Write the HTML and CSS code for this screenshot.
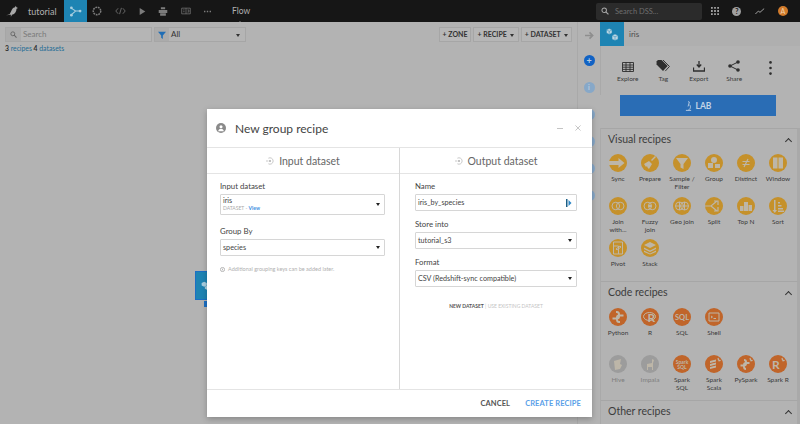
FILE: index.html
```html
<!DOCTYPE html>
<html lang="en">
<head>
<meta charset="utf-8">
<title>New group recipe</title>
<link rel="stylesheet" href="styles.css">
</head>
<body>
<div class="app">
  <header class="topbar">
    <svg class="logo" viewBox="0 0 16 14" width="12" height="14"><path d="M0 13l5-2 3-6c1-2 3-3 4-3l1-2 1 2 2 1-2 1c0 4-2 7-6 8l-1 2H6l1-2H4z" fill="#a8a8a8"/></svg>
    <span class="project">tutorial</span>
    <span class="tile-flow"><svg viewBox="0 0 14 12" width="13" height="11"><path d="M2 2l5 3.500h5M2 10l5-4.500" fill="none" stroke="#a9cfe0" stroke-width="1.200"/><circle cx="2.500" cy="2" r="1.500" fill="#a9cfe0"/><circle cx="2.500" cy="10" r="1.500" fill="#a9cfe0"/><circle cx="12" cy="5.500" r="1.500" fill="#a9cfe0"/></svg></span>
    <nav class="nav-icons">
      <svg viewBox="0 0 12 12" width="10" height="10"><circle cx="6" cy="6" r="4.500" fill="none" stroke="#7c7c7c" stroke-width="1.800" stroke-dasharray="2.200 .9"/></svg>
      <svg viewBox="0 0 14 10" width="11" height="8"><path d="M4 1.500L1 5l3 3.500M10 1.500L13 5l-3 3.500M8.200 1L5.800 9" fill="none" stroke="#7c7c7c"/></svg>
      <svg viewBox="0 0 10 12" width="7" height="9"><path d="M1 1l8 5-8 5z" fill="#7c7c7c"/></svg>
      <svg viewBox="0 0 14 12" width="10" height="9"><path d="M4 0h6v3H4zM1 4h12v4H1zM3 8.500h8V12H3z" fill="#7c7c7c"/></svg>
      <svg viewBox="0 0 14 10" width="10" height="8"><path d="M1 1h12v8H1zM7 1v8M3 3.500h2M3 6h2M9 3.500h2v3H9" fill="none" stroke="#7c7c7c"/></svg>
      <svg viewBox="0 0 10 4" width="7" height="3"><path d="M0 1h2v2H0zM4 1h2v2H4zM8 1h2v2H8z" fill="#7c7c7c"/></svg>
    </nav>
    <span class="crumb">Flow</span>
    <div class="global-search">
      <svg viewBox="0 0 10 10" width="8" height="8"><circle cx="4" cy="4" r="2.800" fill="none" stroke="#a8a8a8" stroke-width="1.300"/><path d="M6 6l3.300 3.300" stroke="#a8a8a8" stroke-width="1.500"/></svg>
      <span>Search DSS...</span>
    </div>
    <div class="top-actions">
      <svg viewBox="0 0 9 9" width="8" height="8"><path d="M0 0h2v2H0zM3.500 0h2v2h-2zM7 0h2v2H7zM0 3.500h2v2H0zM3.500 3.500h2v2h-2zM7 3.500h2v2H7zM0 7h2v2H0zM3.500 7h2v2h-2zM7 7h2v2H7z" fill="#a0a0a0"/></svg>
      <span class="help">?</span>
      <svg viewBox="0 0 12 8" width="10" height="7"><path d="M.500 7l3.500-3.500 2 1.500 5-4.500" fill="none" stroke="#a0a0a0" stroke-width="1.200"/></svg>
      <span class="avatar">A</span>
    </div>
  </header>

  <div class="body">
    <main class="canvas">
      <div class="toolbar">
        <div class="search-box">
          <span class="search-ico"><svg viewBox="0 0 10 10" width="7" height="7"><circle cx="4" cy="4" r="2.800" fill="none" stroke="#666" stroke-width="1.300"/><path d="M6 6l3.300 3.300" stroke="#666" stroke-width="1.500"/></svg></span>
          <span class="search-text">Search</span>
        </div>
        <div class="filter-box">
          <span class="filter-ico"><svg viewBox="0 0 10 10" width="8" height="8"><path d="M0 1h10L6 5.500V10L4 8.500v-3z" fill="#1f6db5"/></svg></span>
          <span class="filter-text">All</span>
          <i class="caret"></i>
        </div>
        <div class="flow-buttons">
          <span class="tool-btn btn-zone">+ ZONE</span>
          <span class="tool-btn btn-recipe">+ RECIPE <i class="caret"></i></span>
          <span class="tool-btn btn-dataset">+ DATASET <i class="caret"></i></span>
        </div>
      </div>
      <p class="counts"><b>3</b> <a>recipes</a> <b>4</b> <a>datasets</a></p>
      <div class="flow-node">
        <svg viewBox="0 0 14 14" width="9" height="9"><path d="M1 3l4-2 4 2v4l-4 2-4-2zM6 9l4-2 3 2v3l-3 2-4-2z" fill="#a9cfe0"/></svg>
      </div>
      <span class="flow-node-label"></span>
    </main>

    <div class="rail">
      <svg class="rail-arrow" viewBox="0 0 10 10" width="9" height="9"><path d="M0 5h8M5 1.500L8.500 5 5 8.500" fill="none" stroke="#8e8e8e" stroke-width="1.800"/></svg>
      <span class="dot dot-plus">+</span>
      <span class="dot dot-pale">i</span>
      <span class="dot dot-pale"></span>
      <span class="dot dot-pale"></span>
      <span class="dot dot-pale"></span>
      <span class="dot dot-pale"></span>
    </div>

    <aside class="side">
      <div class="side-head">
        <span class="side-tile"><svg viewBox="0 0 14 14" width="13" height="13"><g fill="#bcd5e2" stroke="#1e84b3" stroke-width=".5"><path d="M.500 2L3.500.500 6.500 2v3.500L3.500 7 .500 5.500z"/><path d="M.500 2l3 1.500 3-1.500M3.500 3.500V7" fill="none"/><path d="M6.500 8l3.200-1.500L13 8v4l-3.300 1.500L6.500 12z"/><path d="M6.500 8l3.200 1.500L13 8M9.700 9.500v4" fill="none"/></g></svg></span>
        <span class="side-title">iris</span>
      </div>
      <div class="side-actions">
        <div class="action">
          <svg viewBox="0 0 12 10" width="12" height="10"><path d="M.500.500h11v9H.500zM.500 3h11M.500 5.200h11M.500 7.400h11M4 .500v9M8 .500v9" fill="none" stroke="#2e2e2e" stroke-width=".9"/></svg>
          <span>Explore</span>
        </div>
        <div class="action">
          <svg viewBox="0 0 14 13" width="14" height="12"><path d="M0 1.500L1.500 0h4L12 6.500 7 12 0 5z" fill="#2e2e2e"/><path d="M7 0l7 7-4.500 5" fill="none" stroke="#2e2e2e"/></svg>
          <span>Tag</span>
        </div>
        <div class="action">
          <svg viewBox="0 0 12 11" width="12" height="11"><path d="M6 0v5M3.800 3.500L6 6l2.200-2.500M.500 6.500V10h11V6.500" fill="none" stroke="#2e2e2e" stroke-width="1.300"/></svg>
          <span>Export</span>
        </div>
        <div class="action">
          <svg viewBox="0 0 12 12" width="12" height="12"><path d="M10 2L2 6l8 4" fill="none" stroke="#2e2e2e"/><circle cx="10" cy="2" r="1.800" fill="#2e2e2e"/><circle cx="2" cy="6" r="1.800" fill="#2e2e2e"/><circle cx="10" cy="10" r="1.800" fill="#2e2e2e"/></svg>
          <span>Share</span>
        </div>
        <svg class="kebab" viewBox="0 0 3 15" width="3" height="14"><circle cx="1.500" cy="1.500" r="1.400" fill="#2e2e2e"/><circle cx="1.500" cy="7.500" r="1.400" fill="#2e2e2e"/><circle cx="1.500" cy="13.500" r="1.400" fill="#2e2e2e"/></svg>
      </div>
      <div class="lab-btn">
        <svg viewBox="0 0 8 11" width="7" height="10"><path d="M3.500.500L5 1l-1.500 5M1 10.500h6M5 4c2 1.500 1.500 5-1 6" fill="none" stroke="#c3d4e6"/></svg>
        <span>LAB</span>
      </div>

      <section class="sec sec-visual">
        <h3>Visual recipes <i class="chev"></i></h3>
        <div class="recipes">
          <div class="recipe y"><svg viewBox="0 0 18 18"><circle cx="9" cy="9" r="9"/><path class="g" d="M0 7h9.500V4l6 5-6 5v-3H0z"/></svg><span>Sync</span></div>
          <div class="recipe y"><svg viewBox="0 0 18 18"><circle cx="9" cy="9" r="9"/><path class="g" d="M3 10l5-3 3 3-3 5-1.500-1.500L6 12l-1 1zM10 6l4-4 1 1-4 4z"/></svg><span>Prepare</span></div>
          <div class="recipe y"><svg viewBox="0 0 18 18"><circle cx="9" cy="9" r="9"/><path class="g" d="M3 4h12l-4.500 6v5l-3-1.500V10z"/></svg><span>Sample /<br>Filter</span></div>
          <div class="recipe y"><svg viewBox="0 0 18 18"><circle cx="9" cy="9" r="9"/><circle class="g" cx="9" cy="6" r="3"/><path class="g" d="M3 9h5v5H3zM10 10h5v4h-5z"/></svg><span>Group</span></div>
          <div class="recipe y"><svg viewBox="0 0 18 18"><circle cx="9" cy="9" r="9"/><path class="l" d="M5.500 7.500h7M5.500 10.500h7M11 5L7 13"/></svg><span>Distinct</span></div>
          <div class="recipe y"><svg viewBox="0 0 18 18"><circle cx="9" cy="9" r="9"/><path class="g" d="M4 3.500h4.500v11H4zM9.500 3.500H14v11H9.500z"/></svg><span>Window</span></div>
          <div class="recipe y"><svg viewBox="0 0 18 18"><circle cx="9" cy="9" r="9"/><circle class="o" cx="6.800" cy="9" r="3.800"/><circle class="o" cx="11.200" cy="9" r="3.800"/></svg><span>Join<br>with...</span></div>
          <div class="recipe y"><svg viewBox="0 0 18 18"><circle cx="9" cy="9" r="9"/><circle class="o" cx="6.800" cy="9" r="3.800"/><circle class="o" cx="11.200" cy="9" r="3.800"/><circle class="g" cx="9" cy="9" r="1.300"/></svg><span>Fuzzy<br>join</span></div>
          <div class="recipe y"><svg viewBox="0 0 18 18"><circle cx="9" cy="9" r="9"/><circle class="o" cx="6.500" cy="9" r="4"/><circle class="o" cx="11.500" cy="9" r="4"/><path class="o" d="M2.500 9h13M6.500 5v8M11.500 5v8"/></svg><span>Geo join</span></div>
          <div class="recipe y"><svg viewBox="0 0 18 18"><circle cx="9" cy="9" r="9"/><path class="l" d="M0 9h6l6-5M9 4h4v4M6 9l6 5M9 14h4v-4"/></svg><span>Split</span></div>
          <div class="recipe y"><svg viewBox="0 0 18 18"><circle cx="9" cy="9" r="9"/><path class="g" d="M7 5h4v9H7zM3 9h3.500v5H3zM11.500 8H15v6h-3.500z"/></svg><span>Top N</span></div>
          <div class="recipe y"><svg viewBox="0 0 18 18"><circle cx="9" cy="9" r="9"/><path class="g" d="M5 3h1.500v10H8l-2.200 3-2.300-3H5zM9 5h2v1.500H9zM9 8h3.500v1.500H9zM9 11h5v1.500H9zM9 13.500h6V15H9z"/></svg><span>Sort</span></div>
          <div class="recipe y"><svg viewBox="0 0 18 18"><circle cx="9" cy="9" r="9"/><path class="o" d="M4.500 3h9v12h-9zM4.500 7h5v8M7 10l4-3 1 1-4 3z"/></svg><span>Pivot</span></div>
          <div class="recipe y"><svg viewBox="0 0 18 18"><circle cx="9" cy="9" r="9"/><path class="g" d="M9 3l6 3-6 3-6-3zM3 8.500l6 3 6-3v1.500l-6 3-6-3zM3 11.500l6 3 6-3V13l-6 2.500L3 13z"/></svg><span>Stack</span></div>
        </div>
      </section>

      <section class="sec sec-code">
        <h3>Code recipes <i class="chev"></i></h3>
        <div class="recipes">
          <div class="recipe c"><svg viewBox="0 0 18 18"><circle cx="9" cy="9" r="9"/><path class="o2" d="M3.500 10.500H8c1.500 0 2-.8 2-2V6.500C10 5 9 4 8 4H7M14.500 7.500H10c-1.500 0-2 .8-2 2v2C8 13 9 14 10 14h1"/></svg><span>Python</span></div>
          <div class="recipe c"><svg viewBox="0 0 18 18"><circle cx="9" cy="9" r="9"/><ellipse class="o" cx="8.500" cy="8.500" rx="6" ry="4"/><text class="t" x="6.500" y="13.500" font-size="12">R</text></svg><span>R</span></div>
          <div class="recipe c"><svg viewBox="0 0 18 18"><circle cx="9" cy="9" r="9"/><text class="t" x="9" y="11.500" font-size="7.500" text-anchor="middle">SQL</text></svg><span>SQL</span></div>
          <div class="recipe c"><svg viewBox="0 0 18 18"><circle cx="9" cy="9" r="9"/><path class="o" d="M4 5h10v8H4zM6 8l1.500 1L6 10M8.500 10.500h2.500"/></svg><span>Shell</span></div>
          <div class="recipe blank"></div>
          <div class="recipe blank"></div>
          <div class="recipe d"><svg viewBox="0 0 18 18"><circle cx="9" cy="9" r="9"/><path class="g" d="M5 6l7-2-1 5 2 1-2 4-5 1z"/></svg><span>Hive</span></div>
          <div class="recipe d"><svg viewBox="0 0 18 18"><circle cx="9" cy="9" r="9"/><path class="g" d="M11 4l2 1-1 3v7h-1v-3H7v3H6V9l5-1z"/></svg><span>Impala</span></div>
          <div class="recipe c"><svg viewBox="0 0 18 18"><circle cx="9" cy="9" r="9"/><text class="t" x="9" y="8.500" font-size="5" text-anchor="middle">Spark</text><text class="t" x="9" y="13.500" font-size="5" text-anchor="middle">SQL</text></svg><span>Spark<br>SQL</span></div>
          <div class="recipe c"><svg viewBox="0 0 18 18"><circle cx="9" cy="9" r="9"/><path class="g" d="M5 6l6-1.500v2L5 8zM5 9l6-1.500v2L5 11zM5 12l6-1.500v2L5 14z"/><path class="l" d="M13 3l.5 2 2 .5-2 .5"/></svg><span>Spark<br>Scala</span></div>
          <div class="recipe c"><svg viewBox="0 0 18 18"><circle cx="9" cy="9" r="9"/><path class="o2" d="M3.500 10.500H7c1.500 0 2-.8 2-2V7C9 5.500 8 5 7 5M12.500 8H9c-1.500 0-2 .8-2 2v1.500C7 13 8 14 9 14"/><path class="l" d="M13 3l.5 2 2 .5-2 .5"/></svg><span>PySpark</span></div>
          <div class="recipe c"><svg viewBox="0 0 18 18"><circle cx="9" cy="9" r="9"/><text class="t" x="3" y="14" font-size="12">R</text><path class="l" d="M13 3l.5 2 2 .5-2 .5"/></svg><span>Spark R</span></div>
        </div>
      </section>

      <section class="sec sec-other">
        <h3>Other recipes <i class="chev"></i></h3>
      </section>
    </aside>
  </div>

  <div class="modal">
    <div class="modal-head">
      <svg viewBox="0 0 12 12" width="10" height="10"><circle cx="6" cy="6" r="6" fill="#8a8a8a"/><circle cx="6" cy="4.500" r="1.800" fill="#fff"/><path d="M2.500 10c.5-2 2-3 3.500-3s3 1 3.500 3z" fill="#fff"/></svg>
      <h2>New group recipe</h2>
      <span class="minimize"></span>
      <svg class="close" viewBox="0 0 7 7" width="6" height="6"><path d="M.500.500l6 6M6.500.500l-6 6" stroke="#c4c4c4" stroke-width="1.100"/></svg>
    </div>
    <div class="modal-cols">
      <div class="col">
        <div class="col-head"><svg viewBox="0 0 10 10" width="8" height="8"><path d="M3 1.500a4 4 0 1 1 0 7" fill="none" stroke="#aaa" stroke-width=".8"/><path d="M0 5h3" stroke="#aaa" stroke-width=".8"/><circle cx="5" cy="5" r="1" fill="#777"/></svg><span>Input dataset</span></div>
        <div class="fields fields-in">
          <label>Input dataset</label>
          <div class="select tall">
            <div class="select-val"><span>iris</span><small>DATASET - <a>View</a></small></div>
            <i class="caret dark"></i>
          </div>
          <label class="gap-big">Group By</label>
          <div class="select"><span>species</span><i class="caret dark"></i></div>
          <p class="hint"><svg viewBox="0 0 6 6" width="5" height="5"><circle cx="3" cy="3" r="2.500" fill="none" stroke="#aaa"/><path d="M3 2v2" stroke="#aaa"/></svg>Additional grouping keys can be added later.</p>
        </div>
      </div>
      <div class="col col-right">
        <div class="col-head"><svg viewBox="0 0 10 10" width="8" height="8"><path d="M3 1.500a4 4 0 1 1 0 7" fill="none" stroke="#aaa" stroke-width=".8"/><path d="M0 5h3" stroke="#aaa" stroke-width=".8"/><circle cx="5" cy="5" r="1" fill="#777"/></svg><span>Output dataset</span></div>
        <div class="fields fields-out">
          <label>Name</label>
          <div class="select"><span>iris_by_species</span><svg viewBox="0 0 6 8" width="6" height="8"><path d="M0 0h1.500v8H0z" fill="#1c5f86"/><path d="M2.500 1L5.500 4 2.500 7z" fill="#2b86c5"/></svg></div>
          <label class="gap-small">Store into</label>
          <div class="select"><span>tutorial_s3</span><i class="caret dark"></i></div>
          <label class="gap-small">Format</label>
          <div class="select"><span>CSV (Redshift-sync compatible)</span><i class="caret dark"></i></div>
          <p class="mode"><b>NEW DATASET</b> | <span>USE EXISTING DATASET</span></p>
        </div>
      </div>
    </div>
    <div class="modal-foot">
      <span class="cancel">CANCEL</span>
      <span class="create">CREATE RECIPE</span>
    </div>
  </div>
</div>
</body>
</html>
```

FILE: styles.css
```css
* { box-sizing: border-box; }
html, body { margin: 0; height: 100%; overflow: hidden; }
body { font-family: Lato, "Noto Sans", sans-serif; color: #333; background: #b3b3b3; }
.app { position: relative; width: 800px; height: 424px; display: flex; flex-direction: column; overflow: hidden; }

/* top bar */
.topbar { height: 22px; flex: none; display: flex; align-items: center; background: #161616; color: #bdbdbd; }
.logo { margin-left: 6px; }
.project { margin-left: 10px; font-size: 9px; width: 36px; color: #b0b0b0; }
.tile-flow { width: 23px; height: 22px; background: #1e84b3; display: flex; align-items: center; justify-content: center; }
.nav-icons { width: 133px; padding: 0 9px 0 5px; display: flex; align-items: center; justify-content: space-between; }
.crumb { position: relative; width: 16px; margin-left: 12px; font-size: 8.500px; color: #b0b0b0; }
.crumb::after { content: ""; position: absolute; left: 6px; top: 15px; border: 2.500px solid transparent; border-top: 0; border-bottom-color: #b3b3b3; border-bottom-width: 3px; }
.global-search { margin-left: 348px; width: 106px; height: 17px; background: #2b2b2b; border-radius: 2px; display: flex; align-items: center; gap: 6px; padding-left: 5px; font-size: 7.500px; color: #6e6e6e; }
.top-actions { margin-left: 9px; flex: 1; display: flex; align-items: center; justify-content: space-between; padding-right: 12px; }
.help { width: 9px; height: 9px; border-radius: 50%; background: #a0a0a0; color: #161616; font-size: 7px; font-weight: 700; line-height: 9px; text-align: center; }
.avatar { width: 10px; height: 10px; border-radius: 50%; background: #d27b2b; color: #f0d3b0; font-size: 7px; line-height: 10px; text-align: center; }

/* main */
.body { flex: 1; display: flex; min-height: 0; }
.canvas { position: relative; width: 577px; padding: 5px 5px 0; background: #b3b3b3; }
.toolbar { display: flex; height: 15px; }
.search-box { width: 147px; display: flex; border: 1px solid #a6a6a6; background: #b5b5b5; }
.search-ico { width: 15px; background: #ababab; display: flex; align-items: center; justify-content: center; }
.search-text { padding-left: 2px; font-size: 8px; line-height: 13px; color: #7a7a7a; }
.filter-box { position: relative; margin-left: 2px; width: 92px; display: flex; border: 1px solid #a6a6a6; background: #b5b5b5; }
.filter-ico { width: 14px; background: #ababab; display: flex; align-items: center; justify-content: center; }
.filter-text { padding-left: 2px; font-size: 8px; line-height: 13px; color: #333; }
.filter-box .caret { position: absolute; right: 5px; top: 6px; }
.caret { display: inline-block; width: 0; height: 0; border: 2.500px solid transparent; border-top: 3px solid #333; border-bottom: 0; vertical-align: middle; margin-left: 2px; }
.flow-buttons { margin-left: auto; display: flex; gap: 2px; }
.tool-btn { height: 15px; border: 1px solid #a6a6a6; background: #b6b6b6; font-size: 7px; font-weight: 700; line-height: 13px; color: #333; white-space: nowrap; text-align: center; }
.btn-zone { width: 32px; }
.btn-recipe { width: 46px; }
.btn-dataset { width: 51px; }
.counts { margin: 2px 0 0; font-size: 6.800px; line-height: 9px; color: #2e2e2e; }
.counts b { font-weight: 700; }
.counts a { color: #1e6d96; }
.flow-node { position: absolute; left: 195px; top: 249px; width: 30px; height: 29px; background: #1e84b3; border: 1px solid #1b6fc4; display: flex; align-items: center; justify-content: center; padding-right: 10px; }
.flow-node-label { position: absolute; left: 204px; top: 279px; width: 10px; height: 6px; background: #1b6fc4; }

/* rail */
.rail { width: 23px; display: flex; flex-direction: column; align-items: center; padding-top: 9px; border-left: 1px solid #a9a9a9; background: #b3b3b3; }
.rail-arrow { margin-bottom: 15px; }
.dot { width: 11px; height: 11px; border-radius: 50%; flex: none; margin-bottom: 16px; display: block; font-size: 9px; line-height: 11px; font-weight: 700; text-align: center; color: #b9cde0; }
.dot-plus { background: #1162c4; }
.dot-pale { background: #87a8c8; font-size: 7px; }

/* side */
.side { width: 200px; background: #b3b3b3; }
.side-head { height: 24px; display: flex; align-items: center; background: #afafaf; }
.side-tile { width: 24px; height: 24px; background: #1e84b3; display: flex; align-items: center; justify-content: center; }
.side-title { margin-left: 5px; font-size: 8px; color: #4c4c4c; }
.side-actions { position: relative; height: 49px; padding: 11px 0 0 9px; border-left: 1px solid #a9a9a9; display: flex; align-items: flex-start; }
.action { width: 35.500px; display: flex; flex-direction: column; align-items: center; gap: 2px; height: 26px; justify-content: flex-end; color: #3a3a3a; font-size: 6.500px; line-height: 9px; }
.kebab { margin: 4px 0 0 17px; }
.lab-btn { margin: 0 24px 12px 20px; height: 21px; background: #2a6db5; display: flex; align-items: center; justify-content: center; gap: 4px; color: #c3d4e6; font-size: 8.500px; font-weight: 700; }
.sec { border-left: 1px solid #a9a9a9; border-right: 3px solid #a9a9a9; border-top: 1px solid #a6a6a6; padding: 4px 0 0 7px; }
.sec h3 { margin: 0; display: flex; justify-content: space-between; align-items: center; padding-right: 4px; font-size: 10.500px; line-height: 13px; font-weight: 400; color: #3c3c3c; }
.chev { display: block; width: 5px; height: 5px; margin-right: 2px; margin-top: 3px; border-left: 1.200px solid #333; border-top: 1.200px solid #333; transform: rotate(45deg); }
.sec-visual { height: 153px; }
.sec-code { height: 119px; }
.sec-other { height: 30px; }
.recipes { display: grid; grid-template-columns: repeat(6, 32px); margin: 0 0 0 -6px; }
.sec-visual .recipes { margin-top: 8px; grid-auto-rows: 42.500px; }
.sec-code .recipes { margin-top: 9px; grid-auto-rows: 47px; }
.recipe { display: flex; flex-direction: column; align-items: center; text-align: center; font-size: 6.500px; line-height: 8px; color: #3a3a3a; white-space: nowrap; }
.recipe svg { width: 18px; height: 18px; display: block; margin-bottom: 3px; flex: none; }
.recipe span { display: block; }
.recipe.y circle:first-child { fill: #c5912b; }
.recipe.c circle:first-child { fill: #c0652a; }
.recipe.d circle:first-child { fill: #9c9c9c; }
.recipe.d { color: #7e7e7e; }
.recipe.blank { visibility: hidden; }
.g { fill: #bdb6a8; }
.l { fill: none; stroke: #bdb6a8; stroke-width: 1.200; }
.o { fill: none; stroke: #bdb6a8; stroke-width: 1; }
.o2 { fill: none; stroke: #bdb6a8; stroke-width: 2; }
.t { fill: #bdb6a8; font-family: Lato, sans-serif; font-weight: 700; }

/* modal */
.modal { position: absolute; left: 207px; top: 109px; width: 385px; height: 308px; background: #fff; display: flex; flex-direction: column; box-shadow: 0 2px 6px rgba(0,0,0,.25); }
.modal-head { height: 39px; flex: none; display: flex; align-items: center; padding-left: 9px; border-bottom: 1px solid #e4e4e4; }
.modal-head h2 { margin: 0 0 0 9px; font-size: 12px; font-weight: 400; color: #444; }
.minimize { margin-left: auto; width: 6px; height: 1px; background: #c4c4c4; }
.close { margin: 0 11px 0 12px; }
.modal-cols { flex: 1; display: flex; min-height: 0; }
.col { width: 192px; display: flex; flex-direction: column; }
.col-right { flex: 1; width: auto; border-left: 1px solid #d8d8d8; }
.col-head { height: 26px; flex: none; border-bottom: 1px solid #e4e4e4; display: flex; align-items: center; justify-content: center; gap: 5px; font-size: 10.500px; color: #666; }
.fields { display: flex; flex-direction: column; }
.fields-in { padding: 7px 14px 0 13px; }
.fields-out { padding: 7px 15px 0 15px; }
.fields label { font-size: 7.800px; line-height: 11px; color: #444; margin-bottom: 2px; }
.select { height: 17px; border: 1px solid #d6d6d6; border-radius: 1px; display: flex; align-items: center; justify-content: space-between; padding: 0 4px 0 2px; font-size: 7.200px; color: #444; }
.select.tall { height: 21px; }
.select-val { display: flex; flex-direction: column; line-height: 8px; }
.select-val small { font-size: 5px; line-height: 7px; color: #aaa; }
.select-val small a { color: #3b8ee0; font-weight: 700; }
.caret.dark { border-top-color: #222; }
.gap-big { margin-top: 11px; }
.gap-small { margin-top: 8px; }
.hint { margin: 10px 0 0 0; font-size: 5.500px; line-height: 7px; color: #b0b0b0; display: flex; align-items: center; gap: 3px; }
.mode { margin: 16px 0 0; text-align: center; font-size: 5px; line-height: 7px; color: #c4c4c4; }
.mode b { font-weight: 700; color: #555; }
.modal-foot { height: 28px; flex: none; border-top: 1px solid #e4e4e4; display: flex; align-items: center; justify-content: flex-end; padding-right: 11px; font-size: 7.500px; font-weight: 700; letter-spacing: .1px; }
.cancel { color: #555; }
.create { margin-left: 15px; color: #5a9fe8; }
```
